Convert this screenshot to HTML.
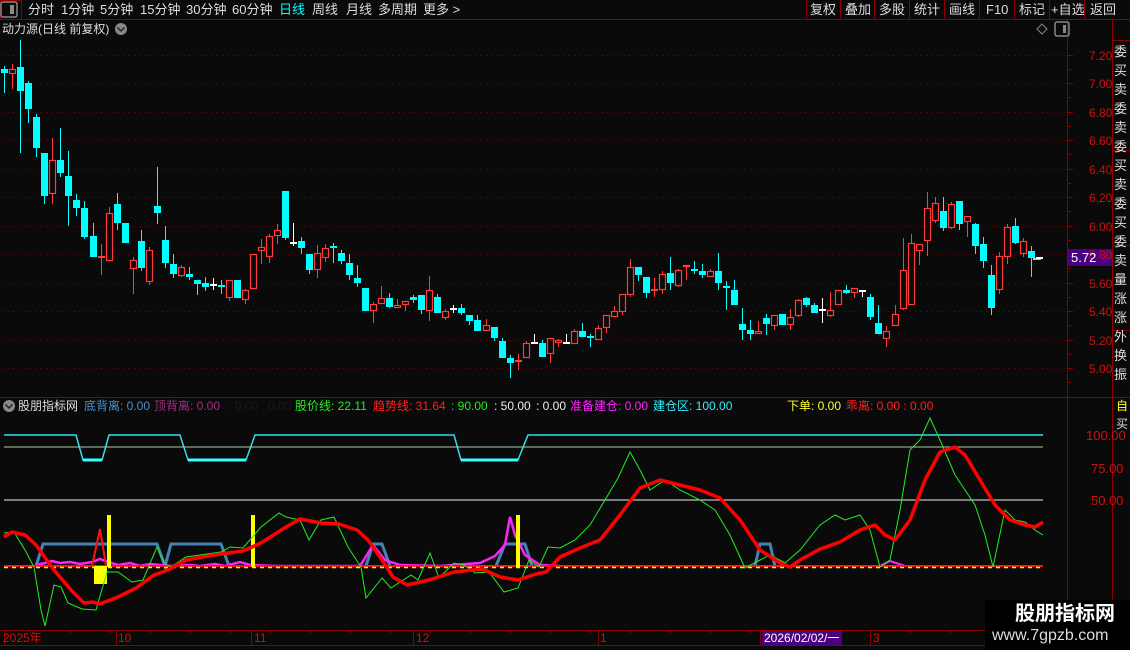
<!DOCTYPE html>
<html><head><meta charset="utf-8"><style>
html,body{margin:0;padding:0;background:#0a0a0a;width:1130px;height:650px;overflow:hidden}
body{position:relative;font-family:"Liberation Sans","Noto Sans CJK SC",sans-serif;font-size:12px;color:#ddd}
.t{position:absolute;white-space:pre;line-height:1}
svg{position:absolute;left:0;top:0}
</style></head><body>
<svg id="s" width="1130" height="650" viewBox="0 0 1130 650">
<g stroke="#8b0000" stroke-width="1" fill="none">
<line x1="0" y1="19.5" x2="1130" y2="19.5"/>
<rect x="0.5" y="0.5" width="21" height="19"/>
<line x1="806.5" y1="0" x2="806.5" y2="19"/><line x1="840.5" y1="0" x2="840.5" y2="19"/><line x1="874.5" y1="0" x2="874.5" y2="19"/><line x1="909.5" y1="0" x2="909.5" y2="19"/><line x1="944.5" y1="0" x2="944.5" y2="19"/><line x1="979.5" y1="0" x2="979.5" y2="19"/><line x1="1014.5" y1="0" x2="1014.5" y2="19"/><line x1="1049.5" y1="0" x2="1049.5" y2="19"/><line x1="1084.5" y1="0" x2="1084.5" y2="19"/>
<line x1="1067.5" y1="20" x2="1067.5" y2="630"/>
<line x1="1112.5" y1="20" x2="1112.5" y2="650"/>
<line x1="0" y1="397.5" x2="1130" y2="397.5"/>
<line x1="0" y1="630.5" x2="1130" y2="630.5"/>
<line x1="0" y1="645.5" x2="1130" y2="645.5"/>
<line x1="1112" y1="40.5" x2="1130" y2="40.5"/><line x1="1112" y1="150.5" x2="1130" y2="150.5"/><line x1="1112" y1="245.5" x2="1130" y2="245.5"/><line x1="1112" y1="330.5" x2="1130" y2="330.5"/>
</g>
<g id="grid" stroke="#6a0000" stroke-dasharray="1.5,4" stroke-width="1"></g>
<g id="ticks" stroke="#8b0000"></g>
<g id="candles"></g>
<polyline fill="none" stroke="#33ddee" stroke-width="1.5" points="4,435 76,435 83,460 102,460 109,435 180,435 188,460 246,460 255,435 454,435 461,460 518,460 528,435 1043,435"/>
<line x1="83" y1="460" x2="102" y2="460" stroke="#33ffff" stroke-width="3"/>
<line x1="188" y1="460" x2="246" y2="460" stroke="#33ffff" stroke-width="3"/>
<line x1="461" y1="460" x2="518" y2="460" stroke="#33ffff" stroke-width="3"/>
<line x1="4" y1="447" x2="1043" y2="447" stroke="#aaccaa" stroke-width="1"/>
<line x1="4" y1="500" x2="1043" y2="500" stroke="#eeeeee" stroke-width="1"/>
<polyline fill="none" stroke="#4682b4" stroke-width="3" points="36,566 43,544 157,544 165,566 171,544 221,544 229,566"/>
<polyline fill="none" stroke="#4682b4" stroke-width="3" points="366,566 373,544 382,544 390,566"/>
<polyline fill="none" stroke="#4682b4" stroke-width="3" points="496,566 505,544 525,544 532,566"/>
<polyline fill="none" stroke="#4682b4" stroke-width="3" points="755,566 760,544 770,544 775,566"/>
<polyline fill="none" stroke="#ff22ff" stroke-width="2.5" points="36,565 45,563 52,561 60,563 70,562 80,564 92,562 100,559 108,562 118,565 130,563 140,566 150,564 170,566 190,565 200,566 215,564 225,566 240,562 250,565 275,566 360,566 373,545 385,560 400,565 440,566 480,563 495,556 505,545 510,517 515,535 525,555 540,565 560,566"/>
<polyline fill="none" stroke="#ff22ff" stroke-width="2" points="880,566 890,561 905,566"/>
<polyline fill="none" stroke="#ff1111" stroke-width="2" points="92,566 100,529 106,566"/>
<line x1="4" y1="566" x2="1043" y2="566" stroke="#ff1111" stroke-width="2"/>
<line x1="4" y1="567.5" x2="1043" y2="567.5" stroke="#ffff00" stroke-width="1.5" stroke-dasharray="4,4"/>
<rect x="94" y="566" width="13" height="18" fill="#ffff00"/>
<rect x="107" y="515" width="4" height="52" fill="#ffff00"/>
<rect x="251" y="515" width="4" height="52" fill="#ffff00"/>
<rect x="516" y="515" width="4" height="52" fill="#ffff00"/>
<polyline fill="none" stroke="#22ee22" stroke-width="1" points="4,533 14,532 25,550 34,567 41,610 45,626 54,585 61,587 68,603 82,609 96,610 107,572 118,572 132,582 143,580 157,547 164,563 171,567 186,557 221,552 230,547 243,548 261,527 279,513 286,517 300,520 309,540 321,520 334,517 348,547 361,567 366,598 382,578 391,588 411,575 418,580 430,553 439,578 454,563 464,565 475,573 489,572 504,592 518,588 529,560 539,567 548,547 560,548 575,540 590,525 605,500 618,478 630,452 640,470 650,490 665,480 680,490 700,500 715,510 730,535 745,568 760,560 770,555 785,563 800,550 820,525 835,515 845,520 860,515 870,530 880,567 890,560 900,510 910,450 920,440 930,418 940,440 955,475 965,490 975,505 985,535 993,567 1005,510 1015,520 1025,522 1035,530 1043,535"/>
<polyline fill="none" stroke="#ff0000" stroke-width="3.5" stroke-linejoin="round" points="4,537 12,532 25,535 36,545 54,570 71,590 84,603 93,602 100,604 118,597 136,588 154,575 168,570 186,560 214,555 243,551 261,543 286,527 300,519 321,523 339,524 357,530 368,540 382,560 393,577 407,585 429,580 454,572 482,569 500,577 518,580 536,574 546,572 560,557 580,548 600,540 620,515 640,488 660,480 680,485 700,490 720,498 740,520 760,550 780,563 790,567 800,560 820,549 840,542 860,530 875,525 885,535 895,540 910,520 925,480 940,452 955,447 965,455 980,480 995,505 1010,520 1025,525 1035,527 1043,522"/>
<rect x="1068" y="249" width="44" height="17" fill="#4b0082"/>
<rect x="762" y="631" width="80" height="14" fill="#4b0082"/>
<rect x="985" y="600" width="145" height="50" fill="#000"/>
<g fill="#888"><rect x="1" y="2" width="16" height="15" rx="2" fill="none" stroke="#888" stroke-width="1.5"/><rect x="10" y="5" width="4" height="9"/>
<rect x="1055" y="22" width="14" height="14" rx="2" fill="none" stroke="#888" stroke-width="1.5"/><rect x="1063" y="25" width="3" height="8"/>
<circle cx="121" cy="29" r="6"/><circle cx="9" cy="406" r="6"/></g>
<path d="M117.5,27.5 L121,31 L124.5,27.5" stroke="#222" stroke-width="1.5" fill="none"/>
<path d="M5.5,404.5 L9,408 L12.5,404.5" stroke="#222" stroke-width="1.5" fill="none"/>
<path d="M1042,24 L1047,29 L1042,34 L1037,29 Z" stroke="#888" fill="none"/>
<line x1="1033" y1="259" x2="1041" y2="259" stroke="#fff" stroke-width="1.5"/>
</svg>
<div class="t" style="left:28px;top:3px;font-size:13px">分时</div>
<div class="t" style="left:61px;top:3px;font-size:13px">1分钟</div>
<div class="t" style="left:100px;top:3px;font-size:13px">5分钟</div>
<div class="t" style="left:140px;top:3px;font-size:13px">15分钟</div>
<div class="t" style="left:186px;top:3px;font-size:13px">30分钟</div>
<div class="t" style="left:232px;top:3px;font-size:13px">60分钟</div>
<div class="t" style="left:279px;top:3px;font-size:13px;color:#00ffff">日线</div>
<div class="t" style="left:312px;top:3px;font-size:13px">周线</div>
<div class="t" style="left:346px;top:3px;font-size:13px">月线</div>
<div class="t" style="left:378px;top:3px;font-size:13px">多周期</div>
<div class="t" style="left:423px;top:3px;font-size:13px">更多 &gt;</div>
<div class="t" style="left:810px;top:3px;font-size:13px">复权</div>
<div class="t" style="left:845px;top:3px;font-size:13px">叠加</div>
<div class="t" style="left:879px;top:3px;font-size:13px">多股</div>
<div class="t" style="left:914px;top:3px;font-size:13px">统计</div>
<div class="t" style="left:949px;top:3px;font-size:13px">画线</div>
<div class="t" style="left:986px;top:3px;font-size:13px">F10</div>
<div class="t" style="left:1019px;top:3px;font-size:13px">标记</div>
<div class="t" style="left:1051px;top:3px;font-size:13px">+自选</div>
<div class="t" style="left:1090px;top:3px;font-size:13px">返回</div>
<div class="t" style="left:2px;top:23px">动力源(日线 前复权)</div>
<div id="pl"></div>
<div class="t" style="left:1071px;top:251px;color:#fff;font-size:13px">5.72</div>
<div class="t" style="left:18px;top:400px">股朋指标网</div>
<div class="t" style="left:84px;top:400px;color:#4a8fd0">底背离: 0.00</div>
<div class="t" style="left:154px;top:400px;color:#a0307f">顶背离: 0.00</div>
<div class="t" style="left:228px;top:400px;color:#1a1a1a">: 0.00 : 0.00</div>
<div class="t" style="left:295px;top:400px;color:#22ee22">股价线: 22.11</div>
<div class="t" style="left:373px;top:400px;color:#ff2020">趋势线: 31.64</div>
<div class="t" style="left:451px;top:400px;color:#22ee22">: 90.00</div>
<div class="t" style="left:494px;top:400px;color:#eee">: 50.00</div>
<div class="t" style="left:536px;top:400px;color:#eee">: 0.00</div>
<div class="t" style="left:570px;top:400px;color:#ff22ff">准备建仓: 0.00</div>
<div class="t" style="left:653px;top:400px;color:#33eeff">建仓区: 100.00</div>
<div class="t" style="left:787px;top:400px;color:#ffff33">下单: 0.00</div>
<div class="t" style="left:846px;top:400px;color:#ff2020">乖离: 0.00 : 0.00</div>
<div class="t" style="left:1086px;top:429px;color:#cc1111;font-size:13px">100.00</div>
<div class="t" style="left:1091px;top:462px;color:#cc1111;font-size:13px">75.00</div>
<div class="t" style="left:1091px;top:494px;color:#cc1111;font-size:13px">50.00</div>
<div class="t" style="left:1116px;top:400px;color:#ffff33">自</div>
<div class="t" style="left:1116px;top:418px;color:#ddd">买</div>
<div class="t" style="left:3px;top:632px;color:#cc1111">2025年</div>
<div class="t" style="left:118px;top:632px;color:#cc1111">10</div>
<div class="t" style="left:254px;top:632px;color:#cc1111">11</div>
<div class="t" style="left:416px;top:632px;color:#cc1111">12</div>
<div class="t" style="left:600px;top:632px;color:#cc1111">1</div>
<div class="t" style="left:764px;top:632px;color:#fff">2026/02/02/一</div>
<div class="t" style="left:873px;top:632px;color:#cc1111">3</div>
<div style="position:absolute;left:1114px;top:42px;width:16px;height:350px;overflow:hidden;color:#ddd;font-size:13px;line-height:19px">委<br>买<br>卖<br>委<br>卖<br>委<br>买<br>卖<br>委<br>买<br>委<br>卖<br>量<br>涨<br>涨<br>外<br>换<br>振</div>
<div class="t" style="left:1015px;top:604px;color:#fff;font-size:20px;font-weight:bold">股朋指标网</div>
<div class="t" style="left:992px;top:628px;color:#ddd;font-size:16px">www.7gpzb.com</div>
<script>
var C=[
"c 69 73 66 93","r 69 74 64 89","c 67 91 40 153","c 83 109 81 123","c 117 148 114 157","c 153 196 153 204","r 160 194 138 204","c 160 173 128 177","c 176 196 151 226","c 200 208 194 216",
"c 208 237 201 239","c 236 257 223 257","r 257 257 244 275","r 213 261 207 261","c 204 223 193 230","c 223 243 223 243","r 260 269 257 294","c 241 268 230 271","r 250 282 247 285","c 206 213 167 224",
"c 240 263 226 268","c 264 274 254 278","r 267 276 265 277","c 274 277 267 280","c 280 284 280 295","c 283 287 277 291","w 285 285 278 290","c 286 286 280 294","r 280 298 280 301","c 280 298 280 298",
"r 290 300 289 304","r 254 289 254 289","r 247 251 239 264","r 236 257 234 263","r 230 236 224 244","c 191 238 191 240","w 243 243 223 246","c 241 248 237 254","c 254 270 254 274","r 253 270 245 278",
"r 248 258 244 262","c 247 247 243 263","c 253 261 250 264","c 263 275 254 280","c 278 283 265 287","c 288 311 288 311","r 304 311 302 323","r 298 304 286 304","c 298 307 293 308","r 305 308 299 308",
"r 301 305 301 311","c 297 300 295 303","c 295 310 295 314","r 290 311 276 321","c 297 313 294 313","r 311 318 309 320","w 309 309 305 313","c 308 313 304 315","c 315 321 315 325","c 320 331 315 331",
"r 325 331 319 331","c 327 338 327 341","c 341 358 338 358","c 358 363 355 378","r 361 361 354 370","r 343 358 341 358","w 343 343 334 343","c 343 357 340 357","r 338 354 338 363","r 340 343 339 347",
"w 343 343 334 343","r 331 344 329 344","c 331 337 323 337","c 337 337 334 347","r 328 340 325 340","r 315 328 315 333","r 311 317 306 317","r 294 312 294 315","r 267 295 259 297","c 267 275 267 281",
"c 277 293 277 298","r 290 290 278 297","r 274 290 271 294","c 273 283 257 290","r 270 286 269 287","r 265 267 265 280","c 270 270 261 274","c 271 275 264 278","r 271 277 269 277","c 271 283 253 290",
"c 287 287 281 310","c 290 305 280 305","c 324 330 308 340","c 330 334 320 340","r 331 334 321 334","c 318 324 314 335","r 315 326 315 330","c 314 325 314 325","r 317 325 309 330","r 300 316 299 317",
"c 298 305 297 307","c 305 313 303 313","w 310 310 298 323","r 310 316 292 317","r 290 305 290 305","c 290 293 285 294","r 288 293 288 298","w 291 291 290 297","c 297 317 294 320","c 323 334 305 334",
"r 331 339 326 347","r 314 326 305 326","r 270 309 238 310","r 243 305 234 305","r 244 251 244 265","r 208 241 192 256","r 203 221 197 223","c 211 228 197 231","r 204 228 202 229","c 201 224 201 230",
"r 216 222 216 237","c 224 246 223 254","c 244 261 237 268","c 275 308 265 315","r 256 290 252 294","r 227 257 224 264","c 226 243 218 244","r 241 254 238 257","c 251 258 246 277","w 258 258 258 258"];
var g=document.getElementById("candles"),h="";
C.forEach(function(s,i){var p=s.split(" "),t=p[0],a=+p[1],b=+p[2],wt=+p[3],wb=+p[4];var x=Math.round(4.3+8.02*i)+0.5;
var col=t=="c"?"#00ffff":t=="r"?"#ff3b3b":"#ffffff";
if(t=="r"&&b-a>1){h+='<line x1="'+x+'" y1="'+wt+'" x2="'+x+'" y2="'+a+'" stroke="'+col+'"/><line x1="'+x+'" y1="'+b+'" x2="'+x+'" y2="'+wb+'" stroke="'+col+'"/><rect x="'+(x-3)+'" y="'+(a+0.5)+'" width="6" height="'+(b-a-1)+'" fill="none" stroke="'+col+'" stroke-width="1.2"/>';}
else{h+='<line x1="'+x+'" y1="'+wt+'" x2="'+x+'" y2="'+wb+'" stroke="'+col+'"/>';
if(b-a>1)h+='<rect x="'+(x-3.5)+'" y="'+a+'" width="7" height="'+(b-a)+'" fill="'+col+'"/>';else h+='<rect x="'+(x-3.5)+'" y="'+(a-1)+'" width="7" height="2" fill="'+col+'"/>';}
});
g.innerHTML=h;
var gr="",pl="",tk="";
for(var k=0;k<12;k++){var v=7.2-0.2*k,y=Math.round(55+k*28.45)+0.5;gr+='<line x1="2" y1="'+y+'" x2="1065" y2="'+y+'"/>';
if(k!=5||true)pl+='<div class="t" style="left:1089px;top:'+(y-6)+'px;color:#cc1111;font-size:12px">'+v.toFixed(2)+'</div>';
tk+='<line x1="1067" y1="'+y+'" x2="1073" y2="'+y+'"/><line x1="1067" y1="'+(y+14)+'" x2="1071" y2="'+(y+14)+'"/>';}
[4,116,251,413,598,760,870].forEach(function(x){tk+='<line x1="'+(x+.5)+'" y1="631" x2="'+(x+.5)+'" y2="645"/>';});
for(var x=30;x<1060;x+=40)tk+='<line x1="'+(x+.5)+'" y1="631" x2="'+(x+.5)+'" y2="634"/>';
document.getElementById("grid").innerHTML=gr;document.getElementById("ticks").innerHTML=tk;document.getElementById("pl").innerHTML=pl;
</script>
</body></html>
